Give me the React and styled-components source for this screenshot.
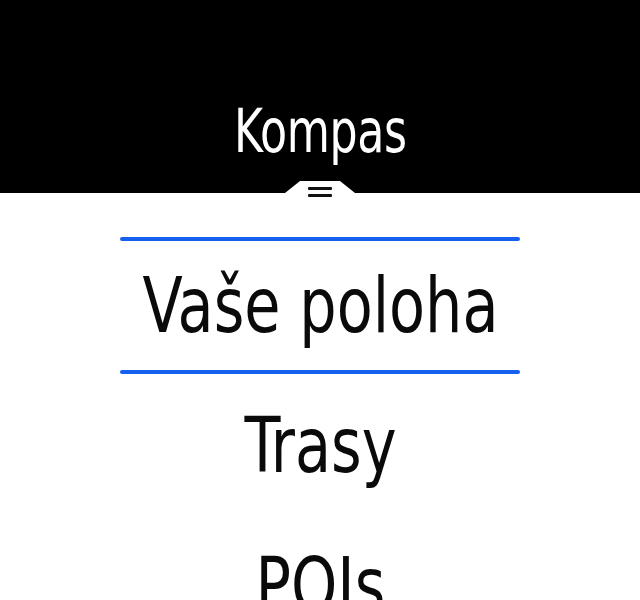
import React from "react";
import styled, { createGlobalStyle } from "styled-components";

const Global = createGlobalStyle`
  html, body { margin: 0; padding: 0; background: #fff; }
  body { width: 640px; height: 600px; overflow: hidden; }
`;

const FONT = `"DejaVu Sans Condensed", "DejaVu Sans", sans-serif`;

const Screen = styled.div`
  width: 640px;
  height: 600px;
  overflow: hidden;
  background: #fff;
  display: flex;
  flex-direction: column;
  font-family: ${FONT};
`;

const Header = styled.header`
  position: relative;
  height: 193px;
  flex: none;
  background: #000;
  display: flex;
  justify-content: center;
  align-items: flex-start;
  padding-top: 101px;
  box-sizing: border-box;
`;

const Title = styled.h1`
  margin: 0;
  color: #fff;
  font-weight: 400;
  font-size: 60px;
  line-height: 60px;
  letter-spacing: -0.5px;
  transform: scaleX(0.82);
`;

const Tab = styled.div`
  position: absolute;
  left: 50%;
  bottom: -5px;
  transform: translateX(-50%);
  width: 70px;
  height: 17px;
  background: #fff;
  clip-path: polygon(15px 0, 55px 0, 70px 12px, 70px 100%, 0 100%, 0 12px);
  display: flex;
  flex-direction: column;
  align-items: center;
  gap: 4px;
  padding-top: 6px;
  box-sizing: border-box;
`;

const Bar = styled.span`
  width: 24px;
  height: 3px;
  background: #111;
  border-radius: 1px;
  flex: none;
`;

const List = styled.ul`
  list-style: none;
  margin: 0;
  padding: 42px 0 0;
  display: flex;
  flex-direction: column;
`;

const Row = styled.li`
  height: 140px;
  flex: none;
  display: flex;
  flex-direction: column;
  align-items: center;
  justify-content: space-between;
  padding: 2px 0 1px;
  box-sizing: border-box;
`;

const Rule = styled.span`
  width: 400px;
  height: 4px;
  border-radius: 2px;
  background: ${(p) => (p.$on ? "#1660f0" : "transparent")};
  flex: none;
`;

const Label = styled.span`
  color: #0a0a0a;
  font-size: 77px;
  line-height: 77px;
  letter-spacing: 0;
  white-space: nowrap;
  transform: scaleX(0.85);
`;

const items = ["Vaše poloha", "Trasy", "POIs"];

export default function App() {
  return (
    <Screen>
      <Global />
      <Header>
        <Title>Kompas</Title>
        <Tab>
          <Bar />
          <Bar />
        </Tab>
      </Header>
      <List>
        {items.map((t, i) => (
          <Row key={t}>
            <Rule $on={i === 0} />
            <Label>{t}</Label>
            <Rule $on={i === 0} />
          </Row>
        ))}
      </List>
    </Screen>
  );
}
